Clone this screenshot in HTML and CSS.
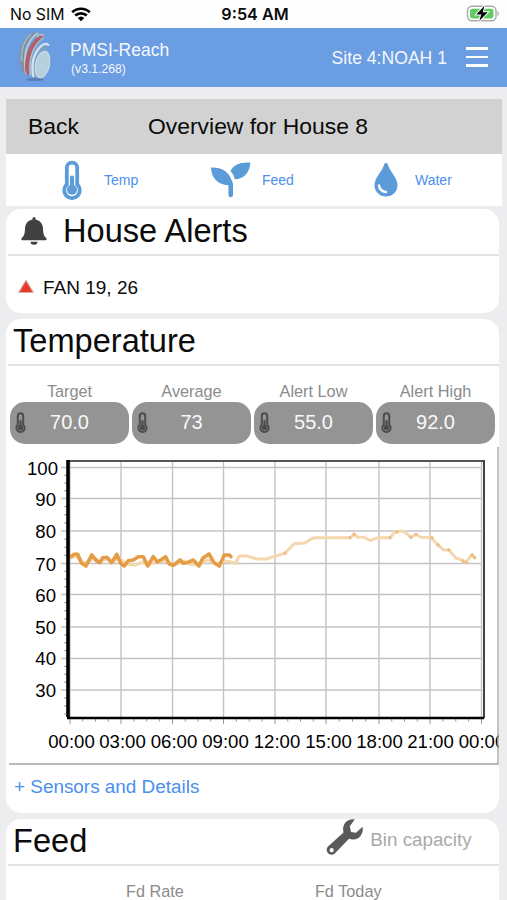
FILE: index.html
```html
<!DOCTYPE html>
<html lang="en">
<head>
    <meta charset="UTF-8">
    <meta name="viewport" content="width=device-width, initial-scale=1.0">
    <title>PMSI-Reach</title>
    <link rel="stylesheet" href="styles.css">
</head>
<body>
    <!-- shared icons -->
    <svg class="defs" width="0" height="0">
        <symbol id="thermo" viewBox="0 0 20 40">
            <path class="tube" d="M4.800 24.500V7.800a5.200 5.200 0 0 1 10.400 0V24.500a7.800 7.800 0 1 1-10.400 0z" stroke="currentColor" stroke-width="3.800"/>
            <circle cx="10" cy="29.800" r="5" fill="currentColor"/>
            <path d="M10 30V17.500" stroke="currentColor" stroke-width="4.200" stroke-linecap="round"/>
        </symbol>
    </svg>

    <div class="status-bar">
        <div class="carrier">
            <span>No SIM</span>
            <svg width="20" height="15" viewBox="0 0 20 15">
                <path d="M1.2 5.3a12.7 12.7 0 0 1 17.6 0M4.2 8.6a8.4 8.4 0 0 1 11.6 0" fill="none" stroke="#000" stroke-width="2.7"/>
                <path d="M10 14.3 6.7 11a4.8 4.8 0 0 1 6.6 0z"/>
            </svg>
        </div>
        <div class="clock">9:54 AM</div>
        <svg class="battery" width="34" height="18" viewBox="0 0 34 18">
            <rect x="1.500" y="1.300" width="28.500" height="14.500" rx="4.500" fill="#fff" stroke="#a9a9a9" stroke-width="1.400"/>
            <rect x="4" y="3.800" width="23.500" height="9.600" rx="2.300" fill="#5fcb62"/>
            <path d="M31.500 6c1.800.5 1.800 4.500 0 5z" fill="#a9a9a9"/>
            <path d="M18.500.8 10.300 9.400h4.900L13.300 16l8.400-8.700h-5z" stroke="#fff" stroke-width="2" paint-order="stroke"/>
        </svg>
    </div>

    <header>
        <svg class="logo" width="34" height="52" viewBox="0 0 34 52">
            <ellipse cx="17" cy="48.500" rx="9" ry="1.600" fill="#587fb3"/>
            <path d="M14 2C6 6 1.500 16 1.500 27c0 8 3 15 7 18C5 30 9 12 19 1.500c-2-.6-3.500-.3-5 .5z" fill="#8292a0"/>
            <path d="M20 2C9 9 4.500 24 8 43" fill="none" stroke="#b2cbdd" stroke-width="2"/>
            <path d="M13 3C6 9 3 19 3.500 30" fill="none" stroke="#a3b6c4" stroke-width="1.400"/>
            <path d="M25.500 5.500c-2.500-2-5-1.300-7 1.200C9.500 16 5.500 29 7.500 41.500l3.800 3.800C9.500 30 13.500 15 25.500 5.500z" fill="#b56066"/>
            <path d="M26 4.500c-2.500-1.500-5-1-7 1.500M25.500 6.500C14.500 15 10.500 29 12.500 45" fill="none" stroke="#b9bcc2" stroke-width="1.500"/>
            <path d="M30 13c-2.500-2-5.500-1-7.500 1.500C14.500 23 12 34 14.500 46l4 1.500C16 34 20 22 30 17z" fill="#7c9fc6"/>
            <path d="M31 14.500c-2.500-2.500-6-1.500-8.500 1C15.500 23 13 34 15.500 46" fill="none" stroke="#d5e3ee" stroke-width="2.400"/>
            <ellipse cx="24.500" cy="33.500" rx="7" ry="13.500" fill="#b6d0df" stroke="#d0dfe9" transform="rotate(12 24.500 33.500)"/>
        </svg>
        <div class="brand">
            <div class="app-name">PMSI-Reach</div>
            <div class="version">(v3.1.268)</div>
        </div>
        <div class="site">Site 4:NOAH 1</div>
        <div class="menu"><i></i><i></i><i></i></div>
    </header>

    <div class="title-bar">
        <a class="back">Back</a>
        <div class="page-title">Overview for House 8</div>
    </div>

    <nav>
        <a class="temp">
            <svg width="20" height="40"><use href="#thermo"/></svg>
            <span>Temp</span>
        </a>
        <a class="feed">
            <svg width="40" height="36" viewBox="0 0 40 36">
                <path d="M0 5.500c10-.5 18 4 20.500 12.500C22 20 22 22 22 24v9a2.300 2.300 0 0 1-4.600 0v-9.800C7 23 0 15.500 0 5.500z"/>
                <path d="M39.300.7C29 0 22 3.500 19.500 9.300c2 2 3.600 4.500 4.200 8C33 17 39 10 39.300.7z"/>
            </svg>
            <span>Feed</span>
        </a>
        <a class="water">
            <svg width="24" height="34" viewBox="0 0 24 34">
                <path d="M10.300 1.200c.6-1.600 2.800-1.600 3.400 0C16 9 23.500 14.500 23.500 22.300a11.500 11.200 0 0 1-23 0C.5 14.500 8 9 10.300 1.200z"/>
                <path d="M5 22.500c.5 3.600 3 6 7 6.500" fill="none" stroke="#fff" stroke-width="2.300" stroke-linecap="round"/>
            </svg>
            <span>Water</span>
        </a>
    </nav>

    <section class="card alerts">
        <div class="card-head">
            <svg width="26" height="28" viewBox="0 0 26 28">
                <path d="M11.500 2.400V1.500a1.500 1.500 0 0 1 3 0v.9c5 1 7.300 4.500 7.500 9 .2 5.500 1 7.600 3.200 9.600.9.900.4 2.300-.8 2.300H1.600c-1.200 0-1.700-1.400-.8-2.300 2.200-2 3-4.100 3.200-9.600.2-4.500 2.500-8 7.500-9zM9.500 24.800h7a3.500 2.900 0 0 1-7 0z" fill="#414141"/>
            </svg>
            <h2>House Alerts</h2>
        </div>
        <div class="alert">
            <svg width="18" height="16" viewBox="0 0 18 16">
                <path d="M9 1.200 16.300 13.500H1.700z" fill="#e63a2b" stroke="#dbaaa4" stroke-width="1.200" stroke-linejoin="round"/>
            </svg>
            <span>FAN 19, 26</span>
        </div>
    </section>

    <section class="card temperature">
        <div class="card-head"><h2>Temperature</h2></div>
        <div class="readings">
            <div class="reading">
                <label>Target</label>
                <div class="pill"><svg width="11" height="21"><use href="#thermo"/></svg>70.0</div>
            </div>
            <div class="reading">
                <label>Average</label>
                <div class="pill"><svg width="11" height="21"><use href="#thermo"/></svg>73</div>
            </div>
            <div class="reading">
                <label>Alert Low</label>
                <div class="pill"><svg width="11" height="21"><use href="#thermo"/></svg>55.0</div>
            </div>
            <div class="reading">
                <label>Alert High</label>
                <div class="pill"><svg width="11" height="21"><use href="#thermo"/></svg>92.0</div>
            </div>
        </div>

        <svg class="chart" width="490" height="318" viewBox="9 447 490 318">
            <path class="grid" d="M70 461V717M121 461V717M172.500 461V717M223.500 461V717M275 461V717M326 461V717M379 461V717M430 461V717M481.500 461V717"/>
            <path class="grid" d="M61 467.500H482M61 498.500H482M61 531H482M61 563.500H482M61 594.500H482M61 627H482M61 658.500H482M61 690H482"/>
            <path class="ticks" id="ticks"/>
            <polyline class="history" points="71,558 76,556 82,563 88,562 94,558 100,561 107,559 113,562 119,558 126,564 135,565 143,562 150,564 158,562 166,561 174,565 184,561 192,565 200,563 208,560 216,564 224,561 231,562 235.500,563.500 239,556.300 246,555.700 253,557.700 257,559 266,559 276,556 285,553.300 294,543.700 305,543 311,539 315,537.700 350,537.700 354,534.300 358,537.300 364,537.300 370,540.500 378,537.700 390,537.700 395,532 402,531 406,533 411,537.300 416,534.500 421,537.300 431,537.500 438,545 443,549.700 449,550 456,558.300 461,559.500 465.500,562.500 472,555 475,558"/>
            <path class="dots" d="M350 537.700h0M354 534.300h0M390 537.700h0M397 532h0M411 537.300h0M416 534.500h0M432 537.700h0M438 545h0M449 550h0M463 561h0M466 562.500h0M472 555h0M474.500 557.500h0M285 553.300h0"/>
            <polyline class="today" points="71,556.700 74,554.300 77.700,554.300 81.700,563.300 86,566 91.700,555 96.700,561 100,562.700 102.700,557.700 107,557.300 111.700,562.700 116.700,554.300 120.700,563.300 124.300,566 128.300,560.700 133.300,560 138.300,556.700 143.300,556.700 147.700,566 153.300,556.700 157.300,562 165.700,556.700 169.300,564 173.300,565.300 180,560 183.300,563.300 187.300,562.700 193.300,560 199,566 202.700,558.300 209,554 214,562.700 219.300,566 224.300,555 229.300,555 231,556.700"/>
            <path d="M67 461H484.500" stroke="#555" stroke-width="2"/>
            <path d="M484 460V718" stroke="#444" stroke-width="2"/>
            <path d="M68 460V717" stroke="#000" stroke-width="3.600"/>
            <path d="M67 718H484" stroke="#000" stroke-width="2.600"/>
            <g class="y-labels">
                <text x="58" y="475">100</text>
                <text x="56" y="506">90</text>
                <text x="56" y="538">80</text>
                <text x="56" y="570.500">70</text>
                <text x="56" y="601.500">60</text>
                <text x="56" y="634">50</text>
                <text x="56" y="665">40</text>
                <text x="56" y="697">30</text>
            </g>
            <g class="x-labels">
                <text x="71.500" y="747.500">00:00</text>
                <text x="122.500" y="747.500">03:00</text>
                <text x="174" y="747.500">06:00</text>
                <text x="225.500" y="747.500">09:00</text>
                <text x="277" y="747.500">12:00</text>
                <text x="328.500" y="747.500">15:00</text>
                <text x="379.500" y="747.500">18:00</text>
                <text x="430.500" y="747.500">21:00</text>
                <text x="482" y="747.500">00:00</text>
            </g>
            <path d="M9 764H498V447" fill="none" stroke="#a3a3a3" stroke-width="1.300"/>
        </svg>

        <a class="details">+ Sensors and Details</a>
    </section>

    <section class="card feed-card">
        <div class="card-head">
            <h2>Feed</h2>
            <svg width="38" height="38" viewBox="0 0 38 38">
                <path fill-rule="evenodd" d="M28.800 1.300 23.800 8.300 25 14 30 14.800 36.500 8.800C38 15 33.500 21.500 27.500 21.500c-2 0-3.300-.3-4.500-.8L9 35.200C6.500 37.500 3 37 1.500 34.500c-1.300-2.300-1-4.500.8-6.200L17.500 14.500C15.500 6.500 21 .2 28.800 1.300zM5.600 30a2.100 2.100 0 1 0 .1 4.200A2.100 2.100 0 0 0 5.600 30z" fill="#5a5a5a"/>
            </svg>
            <span class="capacity">Bin capacity</span>
        </div>
        <div class="feed-labels">
            <label>Fd Rate</label>
            <label>Fd Today</label>
        </div>
    </section>

    <script>
        // minor ticks, four per major step
        const xs = [70, 121, 172.5, 223.5, 275, 326, 379, 430, 481.5];
        const ys = [467.5, 498.5, 531, 563.5, 594.5, 627, 658.5, 690, 722];
        let d = '';

        xs.forEach((x, i) => {
            d += `M${x} 718V724`;
            for (let k = 1; k < 4 && i < xs.length - 1; k++) {
                d += `M${x + (xs[i + 1] - x) * k / 4} 718V721.5`;
            }
        });

        for (let i = 0; i < ys.length - 1; i++) {
            for (let k = 1; k < 4; k++) {
                d += `M64 ${ys[i] + (ys[i + 1] - ys[i]) * k / 4}H67`;
            }
        }

        document.getElementById('ticks').setAttribute('d', d);
    </script>
</body>
</html>
```
FILE: styles.css
```css
* {
    box-sizing: border-box;
}

body {
    font-family: "Liberation Sans", Arial, sans-serif;
    background-color: #ededf0;
    color: #0b0b0b;
    margin: 0;
    height: 900px;
    overflow: hidden;
}

svg {
    display: block;
    flex-shrink: 0;
}

.defs {
    position: absolute;
}

.tube {
    fill: none;
}

.status-bar {
    height: 28px;
    padding: 0 7px 0 10px;
    background-color: #fefefe;
    display: grid;
    grid-template-columns: 1fr auto 1fr;
    align-items: center;
    font-family: Inter, sans-serif;
    font-size: 15.8px;
}

.carrier {
    display: flex;
    align-items: center;
    gap: 7px;
}

.clock {
    font-weight: 600;
    font-size: 16.2px;
}

.battery {
    justify-self: end;
}

header {
    height: 59px;
    padding: 0 19px 0 18px;
    background-color: #6a9de1;
    color: #f4f8fd;
    display: flex;
    align-items: center;
}

.logo {
    margin-top: -2px;
}

.brand {
    margin-left: 18px;
    padding-top: 2px;
    flex: 1;
}

.app-name {
    font-size: 17.5px;
    line-height: 20px;
}

.version {
    font-size: 12.2px;
    line-height: 18px;
    padding-left: 1px;
}

.site {
    font-size: 17.6px;
    padding-top: 2px;
}

.menu {
    width: 22px;
    margin: -1px 0 0 19px;
    display: flex;
    flex-direction: column;
    gap: 6px;
}

.menu i {
    height: 2.4px;
    background-color: #fff;
}

.title-bar {
    height: 55px;
    margin: 12px 5px 0 6px;
    padding: 0 0 0 22px;
    background-color: #d2d2d2;
    display: flex;
    align-items: center;
    font-size: 22.9px;
}

.back {
    width: 120px;
}

nav {
    height: 52px;
    margin: 0 5px 3px 6px;
    padding-left: 56px;
    background-color: #fff;
    color: #4d8fee;
    display: flex;
    font-size: 14px;
}

nav a {
    display: flex;
    align-items: center;
}

nav svg {
    color: #5b9bd8;
    fill: #5b9bd8;
}

.temp {
    width: 149px;
    gap: 22px;
}

.feed {
    width: 163px;
    gap: 11px;
}

.water {
    gap: 17px;
}

.card {
    margin: 0 8px 6px 6px;
    background-color: #fff;
    border-radius: 15px;
    overflow: hidden;
}

.card-head {
    height: 47px;
    margin-left: 2px;
    padding: 0 0 2px 5px;
    border-bottom: 2px solid #e4e4e8;
    display: flex;
    align-items: center;
}

h2 {
    margin: 0;
    font-size: 32.6px;
    font-weight: normal;
    line-height: 44px;
}

.alerts {
    height: 104px;
}

.alerts .card-head {
    padding-left: 13px;
    gap: 16px;
}

.alert {
    display: flex;
    align-items: center;
    gap: 8px;
    height: 64px;
    padding-left: 11px;
    font-size: 19px;
}

.alert svg {
    margin-top: -3px;
}

.temperature {
    height: 494px;
}

.readings {
    display: flex;
    gap: 3px;
    margin: 14px 4px 3px 4px;
}

.reading {
    flex: 1;
}

label {
    color: #8b8b8b;
    font-size: 16.3px;
}

.reading label {
    display: block;
    text-align: center;
    line-height: 22px;
}

.pill {
    height: 42px;
    border-radius: 15px;
    background-color: #949494;
    color: #f8f8f8;
    font-size: 20px;
    line-height: 41px;
    text-align: center;
    position: relative;
}

.pill svg {
    position: absolute;
    left: 5px;
    top: 10px;
    color: #4c4c4c;
}

.pill svg {
    fill: #777;
}

.chart {
    margin-left: 3px;
}

.chart .grid {
    stroke: #c3c3c3;
    stroke-width: 1.4;
}

.chart .ticks {
    stroke: #999;
    stroke-width: 1;
}

.chart polyline {
    fill: none;
    stroke-linejoin: round;
    stroke-linecap: round;
}

.chart .history {
    stroke: #f5d7ae;
    stroke-width: 3;
}

.chart .dots {
    stroke: #ecbc84;
    stroke-width: 3.4;
    stroke-linecap: round;
}

.chart .today {
    stroke: #e49c46;
    stroke-width: 3.6;
}

.y-labels {
    font-size: 18.6px;
    text-anchor: end;
}

.x-labels {
    font-size: 18.6px;
    text-anchor: middle;
}

.details {
    display: block;
    padding: 11px 0 0 8px;
    color: #4a90ec;
    font-size: 18.9px;
}

.feed-card {
    height: 120px;
}

.feed-card svg {
    margin-left: 239px;
    margin-top: -7px;
}

.capacity {
    margin: -2px 0 0 6px;
    color: #a9a9a9;
    font-size: 18.8px;
}

.feed-labels {
    display: flex;
    gap: 131px;
    padding: 16px 0 0 120px;
}
```
